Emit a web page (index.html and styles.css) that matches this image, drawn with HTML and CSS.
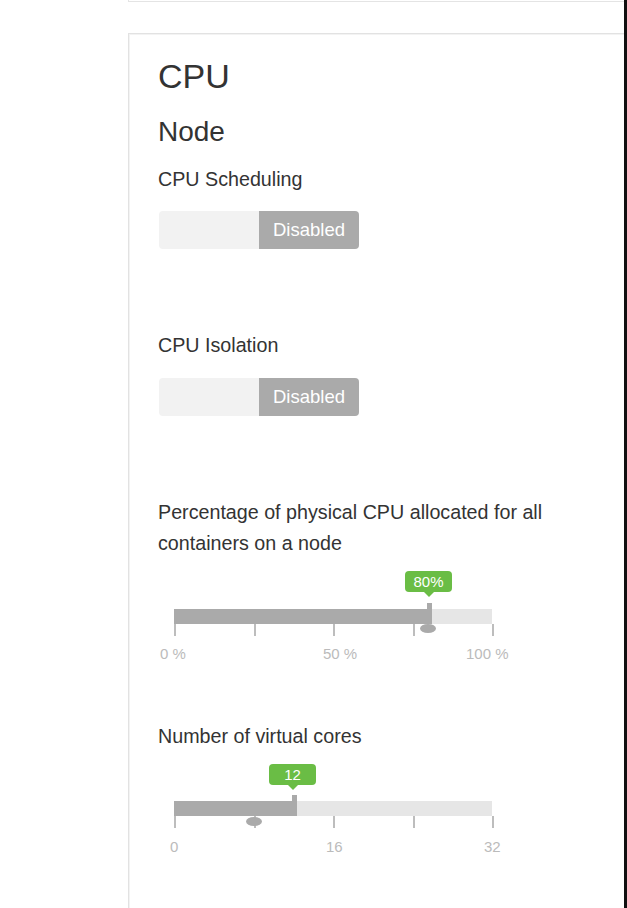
FILE: index.html
```html
<!DOCTYPE html>
<html>
<head>
<meta charset="utf-8">
<link rel="stylesheet" href="styles.css">
</head>
<body>
<div class="main">
  <div class="prev"></div>
  <div class="card">
    <h1 class="title">CPU</h1>
    <h2 class="subtitle">Node</h2>

    <div class="field">
      <div class="label">CPU Scheduling</div>
      <div class="toggle"><span class="tg-off"></span><span class="tg-on">Disabled</span></div>
    </div>

    <div class="field gap-big">
      <div class="label">CPU Isolation</div>
      <div class="toggle t2"><span class="tg-off"></span><span class="tg-on">Disabled</span></div>
    </div>

    <div class="field gap-big">
      <div class="label">Percentage of physical CPU allocated for all<br>containers on a node</div>
      <div class="slider s1">
        <div class="tip" style="left:247px">80%</div>
        <div class="track"><div class="fill" style="width:254px"></div></div>
        <div class="handle" style="left:269px"></div>
        <div class="ticks"><i></i><i></i><i></i><i></i><i></i></div>
        <div class="knob" style="left:262px"></div>
        <div class="tl" style="left:2px">0 %</div>
        <div class="tl" style="left:165px">50 %</div>
        <div class="tl" style="left:308px">100 %</div>
      </div>
    </div>

    <div class="field gap-mid">
      <div class="label">Number of virtual cores</div>
      <div class="slider s2">
        <div class="tip" style="left:111px">12</div>
        <div class="track"><div class="fill" style="width:121px"></div></div>
        <div class="handle" style="left:134px"></div>
        <div class="ticks"><i></i><i></i><i></i><i></i><i></i></div>
        <div class="knob" style="left:88px"></div>
        <div class="tl" style="left:12px">0</div>
        <div class="tl" style="left:168px">16</div>
        <div class="tl" style="left:326px">32</div>
      </div>
    </div>
  </div>
</div>
<div class="edge"></div>
</body>
</html>
```

FILE: styles.css
```css
* { box-sizing: border-box; }
html, body { margin: 0; padding: 0; }
body {
  display: flex;
  height: 908px;
  overflow: hidden;
  background: #fff;
  font-family: "Liberation Sans", Arial, sans-serif;
  color: #333;
}
.main {
  flex: 1;
  padding-left: 128px;
  display: flex;
  flex-direction: column;
}
.prev {
  height: 2px;
  border-left: 1px solid #e4e4e4;
  border-bottom: 1px solid #e4e4e4;
}
.card {
  flex: 1;
  margin-top: 31px;
  border: 1px solid #e2e2e2;
  border-right: none;
  border-bottom: none;
  box-shadow: inset 1px 1px 0 #f3f3f3;
  padding: 22px 0 0 29px;
  background: #fff;
}
.title {
  margin: 0;
  font-size: 34px;
  line-height: 40px;
  font-weight: normal;
}
.subtitle {
  margin: 19px 0 0;
  font-size: 28px;
  line-height: 34px;
  font-weight: normal;
}
.field { margin-top: 15px; }
.gap-big { margin-top: 81px; }
.gap-mid { margin-top: 55px; }
.label {
  font-size: 19.7px;
  line-height: 31px;
}
.toggle {
  margin-top: 16px;
  margin-left: 1px;
  width: 200px;
  height: 38px;
  display: flex;
  border-radius: 4px;
  overflow: hidden;
}
.toggle.t2 { margin-top: 17px; }
.tg-off { flex: 1; background: #f2f2f2; }
.tg-on {
  flex: 1;
  background: #aaaaaa;
  color: #fff;
  font-size: 18.5px;
  display: flex;
  align-items: center;
  justify-content: center;
}
.slider {
  position: relative;
  height: 95px;
  margin-top: 12px;
}
.tip {
  position: absolute;
  top: 0;
  width: 47px;
  height: 21px;
  border-radius: 4px;
  background: #6abd45;
  color: #fff;
  font-size: 15px;
  line-height: 21px;
  text-align: center;
}
.tip::after {
  content: "";
  position: absolute;
  left: 50%;
  bottom: -5px;
  margin-left: -5px;
  border-left: 5px solid transparent;
  border-right: 5px solid transparent;
  border-top: 5px solid #6abd45;
}
.track {
  position: absolute;
  left: 16px;
  top: 38px;
  width: 318px;
  height: 15px;
  background: #e6e6e6;
}
.s2 .track { top: 37px; }
.fill { height: 100%; background: #aaaaaa; }
.handle {
  position: absolute;
  top: 32px;
  width: 5px;
  height: 21px;
  background: #aaaaaa;
}
.s2 .handle { top: 31px; }
.knob {
  position: absolute;
  top: 53px;
  width: 16px;
  height: 9px;
  border-radius: 50%;
  background: #aaaaaa;
}
.ticks {
  position: absolute;
  left: 16px;
  top: 53px;
  width: 320px;
  height: 12px;
  display: flex;
  justify-content: space-between;
}
.s2 .ticks { top: 52px; }
.ticks i {
  display: block;
  width: 2px;
  height: 100%;
  background: #bdbdbd;
}
.tl {
  position: absolute;
  top: 74px;
  font-size: 15px;
  line-height: 18px;
  color: #bbbbbb;
}
.edge {
  width: 3px;
  background: #111;
}
```
